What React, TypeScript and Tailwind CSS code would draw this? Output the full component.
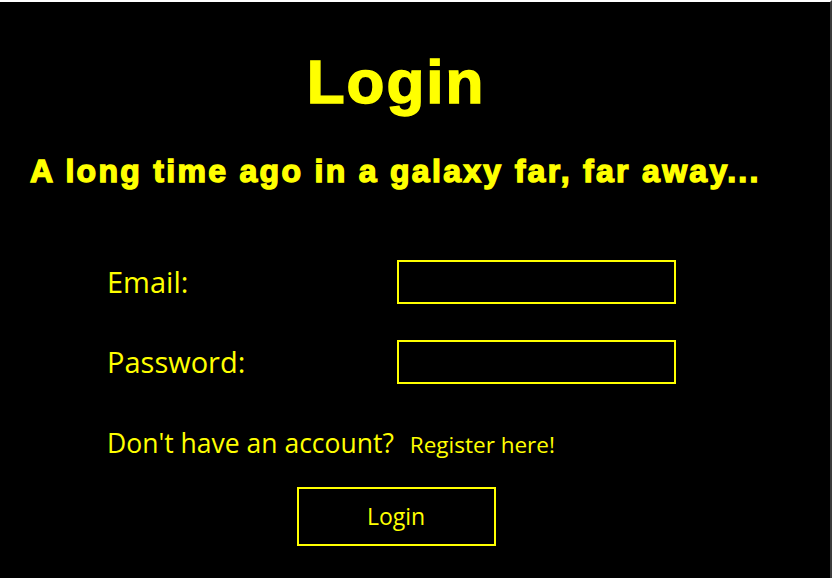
export default function App() {
  return (
    <div className="min-h-[578px] w-[832px] bg-black border-t-2 border-white border-r-2 border-r-[#3c3c3c] text-[#ffff00] font-['Open_Sans',sans-serif]">
      <div className="w-[792px] flex flex-col items-center">
        <h1 className="mt-[42px] text-[62px] leading-[76px] font-bold font-['Liberation_Sans',Arial,sans-serif] tracking-[2px] [-webkit-text-stroke:1.5px_#ffff00]">
          Login
        </h1>
        <p className="mt-[34px] self-start pl-[30px] text-[32px] leading-[34px] font-bold font-['Liberation_Sans',Arial,sans-serif] tracking-[2.3px] [-webkit-text-stroke:1.4px_#ffff00]">
          A long time ago in a galaxy far, far away...
        </p>

        <form className="mt-[72px] self-start pl-[107px] flex flex-col">
          <div className="flex items-center h-[44px]">
            <label className="w-[290px] text-[29px]">Email:</label>
            <input type="email" className="w-[279px] h-[44px] bg-black border-2 border-[#ffff00] outline-none text-[#ffff00] px-2" />
          </div>
          <div className="flex items-center h-[44px] mt-[36px]">
            <label className="w-[290px] text-[29px]">Password:</label>
            <input type="password" className="w-[279px] h-[44px] bg-black border-2 border-[#ffff00] outline-none text-[#ffff00] px-2" />
          </div>
          <div className="flex items-baseline mt-[40px] gap-[16px]">
            <span className="text-[26.5px]">Don't have an account?</span>
            <a className="text-[22.5px] cursor-pointer">Register here!</a>
          </div>
        </form>

        <button className="mt-[23px] w-[199px] h-[59px] border-2 border-[#ffff00] bg-black text-[23px] text-[#ffff00]">
          Login
        </button>
      </div>
    </div>
  );
}
